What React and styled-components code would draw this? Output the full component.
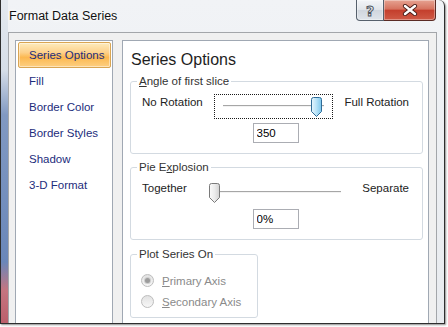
import React from 'react';
import styled, { createGlobalStyle } from 'styled-components';

const Global = createGlobalStyle`
  html, body { margin: 0; padding: 0; background: #fff; }
  body { font-family: "Liberation Sans", Arial, sans-serif; }
  #root { width: 448px; height: 327px; }
`;

const Window = styled.div`
  box-sizing: border-box;
  width: 445px;
  height: 324px;
  display: flex;
  flex-direction: column;
  padding: 0 7px;
  border: 1px solid #2e2e2e;
  border-top: none;
  border-top-right-radius: 6px;
  background:
    linear-gradient(to bottom, #e4e9ef 0px, #d6dee8 70px, #8199c2 115px, #6a87b9 262px, #c47580 290px, #bc5f6b 100%) 0 0 / 7px 100% no-repeat,
    linear-gradient(to bottom, #f1f3f6, #e8ebef);
  box-shadow: 1px 1px 2px rgba(0, 0, 0, 0.45);
  overflow: hidden;
`;

const TitleBar = styled.div`
  height: 32px;
  flex: none;
  display: flex;
  align-items: flex-start;
`;

const Title = styled.div`
  padding: 9px 0 0 1px;
  font-size: 12.5px;
  line-height: 15px;
  color: #111;
  text-shadow: 0 0 6px #fff, 0 0 3px #fff;
`;

const CaptionButtons = styled.div`
  margin-left: auto;
  margin-right: 1px;
  display: flex;
  height: 21px;
`;

const CaptionButton = styled.div`
  box-sizing: border-box;
  height: 21px;
  width: ${p => (p.$close ? 52 : 28)}px;
  display: flex;
  align-items: center;
  justify-content: center;
  border: 1px solid ${p => (p.$close ? '#5a2a24' : '#56606c')};
  border-top: none;
  border-left-width: ${p => (p.$close ? 0 : 1)}px;
  border-radius: ${p => (p.$close ? '0 0 4px 0' : '0 0 0 4px')};
  background: ${p =>
    p.$close
      ? 'linear-gradient(to bottom, #e6a392 0%, #d6735f 45%, #c43f2d 52%, #cf5a46 100%)'
      : 'linear-gradient(to bottom, #f3f5f8 0%, #e1e5ea 48%, #d0d6de 52%, #dfe4ea 100%)'};
  box-shadow: inset 0 0 0 1px rgba(255, 255, 255, 0.35);
`;

const HelpGlyph = styled.span`
  font-family: "DejaVu Sans", sans-serif;
  font-weight: bold;
  font-size: 14px;
  line-height: 14px;
  color: #eef0f3;
  -webkit-text-stroke: 1px #4f5660;
  margin-top: 1px;
`;

const ContentArea = styled.div`
  flex: 1;
  min-height: 0;
  display: flex;
  gap: 9px;
  border: 1px solid #a3a6aa;
  border-bottom: none;
  background: #f0f0f0;
  padding: 7px 7px 0 6px;
`;

const Panel = styled.div`
  box-sizing: border-box;
  width: ${p => p.$width}px;
  background: #fff;
  border: 1px solid #a0a8b3;
  border-bottom: none;
  display: flex;
  flex-direction: column;
`;

const NavList = styled(Panel)`
  padding: 1px 1px 0 2px;
`;

const NavItem = styled.div`
  box-sizing: border-box;
  height: 26px;
  display: flex;
  align-items: center;
  padding-left: 10px;
  border: 1px solid ${p => (p.$selected ? '#d9a552' : 'transparent')};
  border-radius: 2px;
  font-size: 11.5px;
  color: #1d2c7c;
  background: ${p =>
    p.$selected
      ? 'linear-gradient(to bottom, #fdebbd 0%, #fdd089 40%, #fcb850 60%, #fdcf82 100%)'
      : 'transparent'};
  box-shadow: ${p => (p.$selected ? 'inset 0 0 0 1px rgba(255,255,255,0.45)' : 'none')};
`;

const OptionsPanel = styled(Panel)`
  padding: 0 5px 0 7px;
`;

const Heading = styled.h1`
  margin: 9px 0 0 1px;
  font-size: 16px;
  line-height: 20px;
  font-weight: normal;
  color: #1e1e1e;
`;

const Group = styled.fieldset`
  box-sizing: border-box;
  width: ${p => p.$width}px;
  min-width: 0;
  margin: ${p => p.$top}px 0 0 0;
  padding: ${p => p.$pt}px ${p => p.$pr}px ${p => p.$pb}px 6px;
  border: 1px solid #d3dae1;
  border-radius: 3px;
`;

const Legend = styled.legend`
  padding: 0 2px;
  font-size: 11.5px;
  line-height: 14px;
  color: #333;
`;

const Row = styled.div`
  display: flex;
  justify-content: space-between;
  align-items: flex-start;
  height: 25px;
  padding-left: 5px;
`;

const RowLabel = styled.span`
  font-size: 11.5px;
  line-height: 17px;
  color: #222;
  white-space: nowrap;
`;

const SliderBox = styled.div`
  position: relative;
  box-sizing: border-box;
  width: ${p => p.$width}px;
  height: 25px;
  padding: 0 8px;
  border: 1px dotted ${p => (p.$focused ? '#1a1a1a' : 'transparent')};
`;

const Track = styled.div`
  margin-top: 10px;
  height: 0;
  border-top: 1px solid #a6a6a6;
  border-bottom: 1px solid #f2f2f2;
`;

const ThumbSvg = styled.svg`
  position: absolute;
  top: 2px;
  display: block;
`;

const InputRow = styled.div`
  display: flex;
  justify-content: center;
  padding-left: 5px;
  margin-top: 4px;
`;

const ValueBox = styled.input`
  box-sizing: border-box;
  width: 46px;
  height: 20px;
  margin: 0;
  padding: 0 3px;
  border: 1px solid #abadb3;
  font-family: "Liberation Sans", Arial, sans-serif;
  font-size: 11.5px;
  color: #000;
  outline: none;
  background: #fff;
`;

const RadioRow = styled.div`
  display: flex;
  align-items: center;
  gap: 8px;
  height: 21px;
  padding-left: 4px;
  font-size: 11.5px;
  color: #8a8a8a;
`;

const RadioCircle = styled.span`
  box-sizing: border-box;
  width: 13px;
  height: 13px;
  border-radius: 50%;
  border: 1px solid #bdbdbd;
  background: linear-gradient(to bottom, #e2e2e2, #f7f7f7);
  display: flex;
  align-items: center;
  justify-content: center;
  &::after {
    content: '';
    display: ${p => (p.$checked ? 'block' : 'none')};
    width: 5px;
    height: 5px;
    border-radius: 50%;
    background: #9c9c9c;
    box-shadow: 0 0 0 1px #cfcfcf;
  }
`;

function Thumb({ value, max, width, blue }) {
  const trackW = width - 18;
  const left = 8 + (value / max) * (trackW - 11);
  const id = blue ? 'thumbBlue' : 'thumbGray';
  return (
    <ThumbSvg width="11" height="20" viewBox="0 0 11 20" style={{ left }}>
      <defs>
        <linearGradient id={id} x1="0" y1="0" x2="1" y2="0">
          <stop offset="0" stopColor={blue ? '#e8f6fd' : '#fbfbfb'} />
          <stop offset="0.5" stopColor={blue ? '#b6e2f7' : '#ececec'} />
          <stop offset="1" stopColor={blue ? '#7cc6ec' : '#d2d2d2'} />
        </linearGradient>
      </defs>
      <path
        d="M0.5 2.5 Q0.5 0.5 2.5 0.5 H8.5 Q10.5 0.5 10.5 2.5 V14.5 L5.5 19.5 L0.5 14.5 Z"
        fill={`url(#${id})`}
        stroke={blue ? '#2f6c98' : '#7a7a7a'}
        strokeWidth="1"
      />
    </ThumbSvg>
  );
}

function Slider({ value, max, width, focused, blue }) {
  return (
    <SliderBox $width={width} $focused={focused}>
      <Track />
      <Thumb value={value} max={max} width={width} blue={blue} />
    </SliderBox>
  );
}

const navItems = ['Series Options', 'Fill', 'Border Color', 'Border Styles', 'Shadow', '3-D Format'];

export default function App() {
  return (
    <>
      <Global />
      <Window>
        <TitleBar>
          <Title>Format Data Series</Title>
          <CaptionButtons>
            <CaptionButton>
              <HelpGlyph>?</HelpGlyph>
            </CaptionButton>
            <CaptionButton $close>
              <svg width="16" height="12" viewBox="0 0 16 12">
                <path d="M3 2 L13 10 M13 2 L3 10" stroke="#4a1f1a" strokeWidth="4.2" strokeLinecap="round" />
                <path d="M3 2 L13 10 M13 2 L3 10" stroke="#ffffff" strokeWidth="2.4" strokeLinecap="round" />
              </svg>
            </CaptionButton>
          </CaptionButtons>
        </TitleBar>
        <ContentArea>
          <NavList $width={98}>
            {navItems.map((item, i) => (
              <NavItem key={item} $selected={i === 0}>
                {item}
              </NavItem>
            ))}
          </NavList>
          <OptionsPanel $width={307}>
            <Heading>Series Options</Heading>
            <Group $width={293} $top={4} $pt={6} $pr={13} $pb={10}>
              <Legend>
                <u>A</u>ngle of first slice
              </Legend>
              <Row>
                <RowLabel>No Rotation</RowLabel>
                <Slider value={350} max={360} width={119} focused blue />
                <RowLabel>Full Rotation</RowLabel>
              </Row>
              <InputRow>
                <ValueBox readOnly value="350" />
              </InputRow>
            </Group>
            <Group $width={293} $top={6} $pt={6} $pr={13} $pb={10}>
              <Legend>
                Pie E<u>x</u>plosion
              </Legend>
              <Row>
                <RowLabel>Together</RowLabel>
                <Slider value={0} max={400} width={150} />
                <RowLabel>Separate</RowLabel>
              </Row>
              <InputRow>
                <ValueBox readOnly value="0%" />
              </InputRow>
            </Group>
            <Group $width={128} $top={7} $pt={9} $pr={6} $pb={5}>
              <Legend>Plot Series On</Legend>
              <RadioRow>
                <RadioCircle $checked />
                <span>
                  <u>P</u>rimary Axis
                </span>
              </RadioRow>
              <RadioRow>
                <RadioCircle />
                <span>
                  <u>S</u>econdary Axis
                </span>
              </RadioRow>
            </Group>
          </OptionsPanel>
        </ContentArea>
      </Window>
    </>
  );
}
